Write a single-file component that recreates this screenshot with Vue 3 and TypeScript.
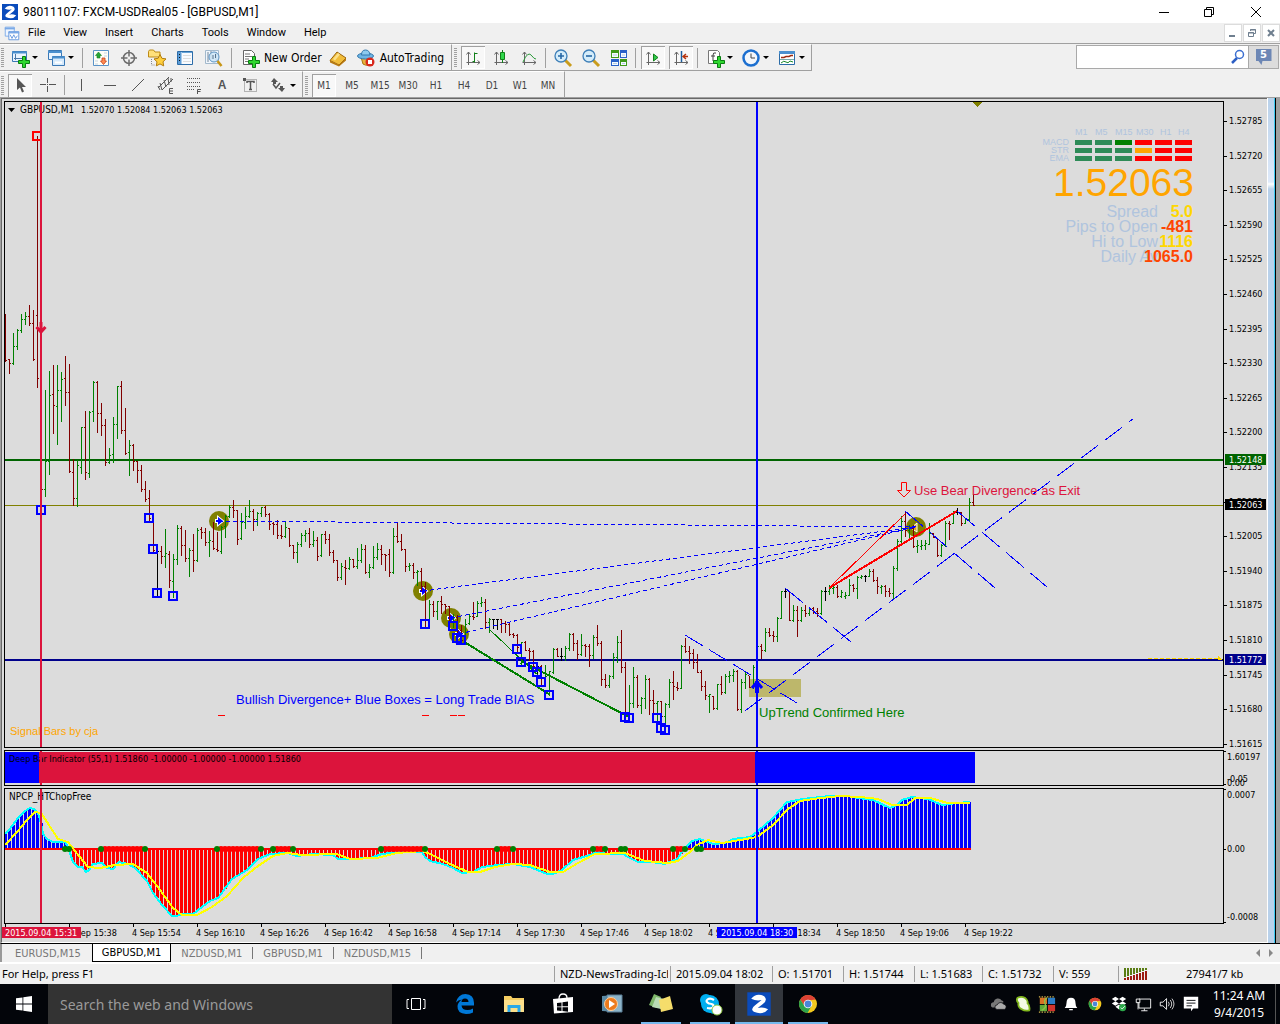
<script setup lang="ts">
type Point = [number, number]

const menus = ['File', 'View', 'Insert', 'Charts', 'Tools', 'Window', 'Help']
const frames = ['M1', 'M5', 'M15', 'M30', 'H1', 'H4', 'D1', 'W1', 'MN']
const tabs = ['EURUSD,M15', 'GBPUSD,M1', 'NZDUSD,M1', 'GBPUSD,M1', 'NZDUSD,M15']

interface Tool { icon?: string; label?: string; drop?: boolean; on?: boolean; sep?: boolean; title?: string }
const standard: Tool[] = [
  { icon: 'newChart', drop: true, title: 'New chart' }, { icon: 'profiles', drop: true, title: 'Profiles' }, { sep: true },
  { icon: 'market', title: 'Market Watch' }, { icon: 'target', title: 'Data Window' }, { icon: 'favorites', title: 'Navigator' },
  { icon: 'terminal', title: 'Terminal' }, { icon: 'tester', title: 'Strategy Tester' }, { sep: true },
  { icon: 'order', label: 'New Order' }, { icon: 'book', title: 'MetaEditor' }, { icon: 'auto', label: 'AutoTrading' },
]
const charting: Tool[] = [
  { icon: 'bars', on: true, title: 'Bar chart' }, { icon: 'candles', title: 'Candlesticks' }, { icon: 'line', title: 'Line chart' }, { sep: true },
  { icon: 'zoomIn', title: 'Zoom in' }, { icon: 'zoomOut', title: 'Zoom out' }, { icon: 'tile', title: 'Tile windows' }, { sep: true },
  { icon: 'scroll', on: true, title: 'Auto scroll' }, { icon: 'shift', on: true, title: 'Chart shift' }, { sep: true },
  { icon: 'indicators', drop: true, title: 'Indicators' }, { icon: 'clock', drop: true, title: 'Periods' }, { icon: 'template', drop: true, title: 'Templates' },
]
const drawing: Tool[] = [
  { icon: 'cursor', on: true, title: 'Cursor' }, { icon: 'cross', title: 'Crosshair' }, { sep: true },
  { icon: 'vline', title: 'Vertical line' }, { icon: 'hline', title: 'Horizontal line' }, { icon: 'trend', title: 'Trendline' },
  { icon: 'channel', title: 'Channel' }, { icon: 'fibo', title: 'Fibonacci' }, { icon: 'text', title: 'Text' },
  { icon: 'label', title: 'Text label' }, { icon: 'arrows', drop: true, title: 'Arrows' },
]

const axes = '<path d="M5.500 4v13M3.500 14.500H17" stroke="#666" fill="none"/><path d="M3.500 6.500l2-2.500 2 2.500M14.500 12.500l2.500 2-2.500 2" stroke="#666" fill="none"/>'
const plus = '<path d="M12.500 8.500h3v4h4v3h-4v4h-3v-4h-4v-3h4z" fill="#2fd82f" stroke="#087d10"/>'
const chrome = '<circle cx="10" cy="10" r="9" fill="#f2c81e"/><path d="M2.200 5.500A9 9 0 0 1 17.800 5.500L10 6.500 6.500 12z" fill="#dd4235"/><path d="M2.200 5.500A9 9 0 0 0 9.500 19L13.500 12 6.500 12z" fill="#2ba34b"/><circle cx="10" cy="10" r="4.300" fill="#fff"/><circle cx="10" cy="10" r="3.400" fill="#4a86d8"/>'
const logo = '<rect x="1" y="1" width="18" height="18" fill="#0a4bbb"/><path d="M4 6Q8 1 14 4Q17 7 13 10L9 13Q13 12 17 14Q13 19 6 16Q3 14 7 11L12 7Q8 8 4 6z" fill="#fff"/>'
const icons: Record<string, string> = {
  logo,
  chart: '<path d="M2.500 3.500h10v10h-10z" fill="#eef5ff" stroke="#7aa9e6"/><path d="M2 5h11" stroke="#7aa9e6" stroke-width="2"/><path d="M6.500 8.500h11v9h-11z" fill="#fff" stroke="#5e93dc"/><path d="M6 9.500h12" stroke="#7aa9e6" stroke-width="2"/><path d="M8 12l2 4 2-4 2 4 2-3" fill="none" stroke="#5e93dc"/>',
  newChart: '<path d="M2.500 3.500h14v10h-14z" fill="#e9f4ff" stroke="#3a78b5"/><path d="M2 4.500h15" stroke="#4a90cf" stroke-width="2"/><path d="M5.500 6v6M4 10.500h8" stroke="#4a78a8"/>' + plus,
  profiles: '<path d="M2.500 2.500h13v9h-13z" fill="#e9f4ff" stroke="#3a78b5"/><path d="M2 4h14" stroke="#4a90cf" stroke-width="2"/><path d="M6.500 8.500h12v9h-12z" fill="#d6eafc" stroke="#3a78b5"/><path d="M6 9.500h13" stroke="#4a90cf" stroke-width="2"/><path d="M9 14.500h7" stroke="#fff" stroke-width="2"/>',
  market: '<path d="M2.500 2.500h15v15h-15z" fill="#fffef8" stroke="#5a93c8"/><path d="M13 5h3M13 8h3M4 13h3M4 16h3" stroke="#c5d4e2"/><path d="M7.500 4l3 3.500H9v2.500H6V7.500H4.500z" fill="#27a536" stroke="#158022" stroke-width=".6"/><path d="M12.500 16.500l-3-3.500h1.500v-3h3v3h1.500z" fill="#ff8a50" stroke="#c4411c" stroke-width=".8"/>',
  target: '<circle cx="10" cy="10" r="5.500" fill="none" stroke="#6c6c6c" stroke-width="1.500"/><path d="M10 2v6.500M10 11.500V18M2 10h6.500M11.500 10H18" stroke="#6c6c6c" stroke-width="1.500"/>',
  favorites: '<path d="M1.500 3.500l1-1.500h4l1.500 2h5v5h-11.500z" fill="#ffe07a" stroke="#bd8b17"/><path d="M4.500 11v6H8" stroke="#888" fill="none" stroke-dasharray="1 1"/><path d="M13 6.500l1.900 3.800 4.100.600-3 2.900.700 4.100-3.700-2-3.700 2 .700-4.100-3-2.900 4.100-.600z" fill="#ffcf3c" stroke="#b27c0e"/>',
  terminal: '<path d="M2.500 3.500h15v13h-15z" fill="#f8fbff" stroke="#2c6ca8"/><path d="M3 4h3.500v12H3z" fill="#5b9bd5"/><path d="M7 4.500h10" stroke="#68a4d8"/><path d="M8 7.500h8M8 10.500h8M8 13.500h8" stroke="#ddd"/><path d="M4 6h1v1H4zM4 9h1v1H4zM4 12h1v1H4z" fill="#111"/>',
  tester: '<path d="M2.500 2.500h13v13h-13z" fill="#f0f6fc" stroke="#a3b9cc"/><path d="M5 4v10M8 3v8M13 4v8" stroke="#76889a"/><circle cx="11" cy="9" r="5" fill="#cfe6f7" fill-opacity=".85" stroke="#5e95c4"/><path d="M10 7v4M12.500 6v4" stroke="#56728c"/><path d="M14.500 13l4 5" stroke="#c79516" stroke-width="2.500"/>',
  order: '<path d="M3.500 2.500h8l3 3v11h-11z" fill="#fff" stroke="#666"/><path d="M5 6h5M5 8.500h7M5 11h4M5 13.500h3" stroke="#777"/>' + plus,
  book: '<path d="M2 12.500L9 4l9 6-7 7z" fill="#f1bd3a" stroke="#99630b"/><path d="M2 12.500l9 4.500 7-7v2.500l-7 6-9-4z" fill="#b8790f"/><path d="M5 11l5-6 2 1.500-5 6z" fill="#fbe08a"/>',
  auto: '<path d="M5 9l2 7q5 3 8-1V8z" fill="#e8b23d" stroke="#a8760f"/><ellipse cx="9.500" cy="8" rx="8" ry="3" fill="#6db5e4" stroke="#3579ad"/><path d="M5.500 7q0-5 4-5t4.500 5z" fill="#8ecbef" stroke="#3579ad"/><circle cx="14" cy="14" r="4.500" fill="#d8281c"/><path d="M12 12h4v4h-4z" fill="#fff"/>',
  bars: axes + '<path d="M9.500 13.500h2M11.500 4.500v10M11.500 5.500h3" stroke="#12801a" fill="none"/>',
  candles: axes + '<path d="M11.500 2v13" stroke="#12801a"/><path d="M9.500 4.500h4v7h-4z" fill="#2fd84a" stroke="#12801a"/>',
  line: axes + '<path d="M4 14q5-12 9-6 2 3 4 3" stroke="#2b9a3a" fill="none"/>',
  zoomIn: '<path d="M12 12l6 6" stroke="#c99c1c" stroke-width="3"/><circle cx="8" cy="8" r="6" fill="#d4ecfa" stroke="#3e7fb8" stroke-width="1.300"/><path d="M5 8h6M8 5v6" stroke="#2667a5" stroke-width="1.600"/>',
  zoomOut: '<path d="M12 12l6 6" stroke="#c99c1c" stroke-width="3"/><circle cx="8" cy="8" r="6" fill="#d4ecfa" stroke="#3e7fb8" stroke-width="1.300"/><path d="M5 8h6" stroke="#2667a5" stroke-width="1.600"/>',
  tile: '<path d="M2 2h8v8H2zM11 11h7v7h-7z" fill="#3f9a1a"/><path d="M11 2h7v8h-7zM2 11h8v7H2z" fill="#2a62c9"/><path d="M3 5h6v4H3zM12 5h5v4h-5zM3 14h6v3H3zM12 14h5v3h-5z" fill="#f4faff"/><path d="M4 7h4M13 7h3M4 15.500h4M13 15.500h3" stroke="#b5cbe0"/>',
  scroll: axes + '<path d="M10.500 6v7l4.500-3.500z" fill="#2fc84a" stroke="#12801a"/>',
  shift: axes + '<path d="M10.500 3v11" stroke="#1d5d9c" stroke-width="1.500"/><path d="M17 8.500h-4M15 6l-3 2.500 3 2.500" stroke="#b5310c" fill="none" stroke-width="1.400"/>',
  indicators: '<path d="M3.500 2.500h9l2 2v11h-11z" fill="#fff" stroke="#777"/><path d="M11 5q-3-1-3 2v6M6 8h4" stroke="#444" fill="none"/>' + plus,
  clock: '<circle cx="10" cy="10" r="7.500" fill="#f4f7fb" stroke="#1c6fd0" stroke-width="2.500"/><path d="M10 5.500V10h4" stroke="#444" fill="none"/>',
  template: '<path d="M2.500 3.500h15v13h-15z" fill="#fff" stroke="#2c6ca8"/><path d="M2 4.500h16" stroke="#4a90cf" stroke-width="3"/><path d="M4 9.500h3l2-1h3l2-1h2" stroke="#9c2c12" fill="none" stroke-width="1.400"/><path d="M3 11.500h14" stroke="#7aa"/><path d="M4 15q3-3 5-1t4-1l3 1" stroke="#1a8a2a" fill="none"/>',
  cursor: '<path d="M7 3v12l3-2.500 2 5 2-1-2-4.500h4z" fill="#555"/>',
  cross: '<path d="M9.500 3v5M9.500 11v6M2 9.500h6M11 9.500h7" stroke="#555"/><path d="M9 9h1v1H9z" fill="#555"/>',
  vline: '<path d="M9.500 4v12" stroke="#555"/>',
  hline: '<path d="M4 10.500h12" stroke="#555"/>',
  trend: '<path d="M4 16L16 4" stroke="#555"/>',
  channel: '<path d="M2 13L13 2M6 15L17 4M4 8l2 7M8 5l2 7M12 3l1 7M2 11l2 4M15 3l0 4" stroke="#555" fill="none"/><path d="M17 13.500h-3.500v5H17M13.500 16H17" stroke="#555" fill="none"/>',
  fibo: '<path d="M3 3.500h14M3 7.500h14M3 11.500h14M3 14.500h8" stroke="#555" stroke-dasharray="1 1"/><path d="M17 14.500h-3.500V19M13.500 16.500h3" stroke="#555" fill="none"/>',
  label: '<rect x="4.500" y="4.500" width="12" height="12" fill="none" stroke="#777" stroke-dasharray="1 1"/><path d="M7 8V6.500h7V8M10.500 6.500v8M9 14.500h3" stroke="#555" stroke-width="1.500" fill="none"/><path d="M3 3h3v3H3z" fill="#555"/>',
  arrows: '<path d="M6 3l4 4H8v2H5V7H3z" fill="#555"/><path d="M5 9l3 4 4-5" stroke="#555" stroke-width="1.500" fill="none"/><path d="M14 17l-4-4h2v-2h3v2h2z" fill="#555"/>',
  taskView: '<path d="M5.500 4.500h9v11h-9z" fill="none" stroke="#fff"/><path d="M3 5.500H1v9h2M17 5.500h2v9h-2" fill="none" stroke="#fff"/>',
  edge: '<path d="M1 8.500Q3 0 10.500 0Q19 .500 19 9v2.500H6.500q.500 4.500 6 4.500 3 0 5.500-1.500v4Q15 20 11 20 2 19.500 2.500 12q.500-4 4.500-6.500Q3 6 1 8.500zM6.500 8h7q0-3.500-3.500-3.500T6.500 8z" fill="#0078d7"/>',
  folder: '<path d="M0 2h7l1.500 2H20v14H0z" fill="#f5ce62"/><path d="M0 6h20v12H0z" fill="#fde08b"/><path d="M3.500 18v-7h13v7h-3v-4h-7v4z" fill="#2ca9e8"/>',
  store: '<path d="M0 5l20-2v15l-19 1.500z" fill="#fff"/><path d="M6 5q0-5 4-5t4 4" stroke="#fff" stroke-width="1.300" fill="none"/><path d="M4 9l4.500-.600v4H4zM9.500 8.300L15 7.500v4.700H9.500zM4 13.300h4.500v3.600L4 16.500zM9.500 13.300H15v4.400l-5.500-.600z" fill="#03050a"/>',
  media: '<path d="M0 2l14-1v17L0 17z" fill="#5b8aa5"/><path d="M5 1h15v17H5z" fill="#8db4c9" stroke="#5a7f96"/><circle cx="9" cy="10" r="6.500" fill="#ee7b1c" stroke="#fbd0a0"/><path d="M7 6l6 4-6 4z" fill="#fff"/>',
  notes: '<path d="M3 0l7 3-4 11-8-3z" fill="#7fb86c"/><path d="M5 3l8 2-3 10-9-2z" fill="#b9dcb5"/><path d="M8 6l11-4 3 13-12 3z" fill="#f5dd6b"/>',
  skype: '<circle cx="6" cy="6" r="6" fill="#00aff0"/><circle cx="14" cy="14" r="6" fill="#00aff0"/><circle cx="10" cy="10" r="9" fill="#00aff0"/><path d="M14 6Q10 3.500 7.500 5.500T9 9.500q5 .500 4.500 3T7 14" stroke="#fff" stroke-width="2.200" fill="none"/><circle cx="17" cy="16" r="5" fill="#fff" stroke="#8cc63f"/>',
  chrome,
  cloud: '<path d="M4 14a3 3 0 0 1 0-6 5 5 0 0 1 9-2q2 0 2 2l-5 2-2 4z" fill="#777"/><path d="M8 16a2.500 2.500 0 0 1 0-5 4 4 0 0 1 7-1q3 .500 3 3t-2 3z" fill="#aaa" stroke="#05070b" stroke-width=".8"/>',
  leaf: '<path d="M4 3q4-2 8 0 4 3 3 6 3 3 2 8-5 1-8-1-5-2-4-7Q2 6 4 3z" fill="#f4fbe4" stroke="#82b81e" stroke-width="2"/>',
  shield: '<path d="M2 3h8v7H2z" fill="#d87324"/><path d="M11 3h8v7h-8z" fill="#2b7bc4"/><path d="M2 11h8v7H2z" fill="#5faa37"/><path d="M11 11h8v7h-8z" fill="#d0342c"/><path d="M1 2h18M1 19h18" stroke="#d4b64d" stroke-width="1.500" stroke-dasharray="1.500 1.500"/><path d="M10 3Q6 6 8 10t-4 7" stroke="#8cc04a" stroke-width="1.500" fill="none"/>',
  bell: '<path d="M10 3q5 0 5 6 0 4 2 5.500H3Q5 13 5 9q0-6 5-6zM8 15.500h4v1.500H8z" fill="#fff"/>',
  dropbox: '<path d="M6 2l4 2.500-4 2.500-4-2.500zM14 2l4 2.500-4 2.500-4-2.500zM6 7l4 2.500L6 12l-4-2.500zM14 7l4 2.500-4 2.500-4-2.500zM6 13l4-2.500 4 2.500-4 3z" fill="#fff"/><circle cx="14" cy="14" r="4" fill="#2ca84a"/><path d="M12 14l1.500 1.500 3-3" stroke="#fff" fill="none"/>',
  network: '<path d="M5.500 4.500h13v10h-13z" fill="none" stroke="#fff"/><path d="M2.500 4.500h4v4h-4zM4.500 8v8M11.500 15v2.500M8 17.500h7" stroke="#fff" fill="#05070b"/>',
  volume: '<path d="M2.500 8h3l4-4v12l-4-4h-3z" fill="none" stroke="#fff"/><path d="M11.500 7.500q2 2.500 0 5M13.500 5.500q3.500 4.500 0 9M15.500 4q4.500 6 0 12" stroke="#ddd" fill="none"/>',
  action: '<path d="M2 2h16v13h-5.500L10 18v-3H2z" fill="#fff"/><path d="M5 6h10M5 9h10M5 12h6" stroke="#05070b"/>',
}

const apps = [
  { icon: 'taskView', state: '' }, { icon: 'edge', state: '' }, { icon: 'folder', state: '' }, { icon: 'store', state: '' },
  { icon: 'media', state: '' }, { icon: 'notes', state: 'open' }, { icon: 'skype', state: 'open' },
  { icon: 'logo', state: 'active' }, { icon: 'chrome', state: 'open' },
]
const tray = ['cloud', 'leaf', 'shield', 'bell', 'chrome', 'dropbox', 'network', 'volume', 'action']

/* one record per minute: high, low, open, close */
const quotes = `314,361,314,360 359,373,359,363 333,364,363,346 329,349,346,330 314,332,330,319 312,324,319,316 305,325,316,323 310,360,323,359 136,387,315,378 361,508,385,489
390,496,489,461 371,474,461,395 365,433,394,405 365,444,406,390 372,421,390,379 356,405,378,392 364,472,392,471 459,505,472,498 460,506,498,465 427,473,467,427
411,479,427,472 411,477,473,412 381,421,411,382 381,432,382,413 403,435,413,425 419,465,425,462 448,463,462,455 417,462,454,424 386,438,424,386 381,433,386,430
408,454,430,453 440,475,452,445 444,470,445,461 461,482,461,470 465,491,470,489 481,501,489,499 490,520,498,518 518,551,518,550 548,595,551,551 546,563,551,556
529,567,556,553 551,587,554,580 554,597,581,559 525,564,559,528 526,555,528,545 530,561,545,558 548,576,558,550 534,571,550,560 528,561,560,530 527,538,529,532
528,545,532,542 531,556,542,540 522,549,541,548 532,551,549,550 526,553,551,527 515,537,526,516 505,517,516,507 500,517,507,510 510,544,510,539 513,539,538,522
507,528,522,516 500,517,516,511 509,530,511,519 512,525,519,513 507,516,513,507 506,516,507,514 513,529,514,524 522,534,523,524 520,538,524,535 525,538,535,536
522,537,536,527 528,546,528,545 545,558,545,552 542,562,552,544 533,546,544,535 530,541,535,533 528,547,533,544 531,546,544,540 537,560,540,556 534,556,555,534
531,543,534,539 534,555,539,552 550,562,552,560 560,580,560,577 563,579,577,566 560,584,567,568 557,569,568,559 559,567,559,566 548,568,566,560 544,562,560,549
545,573,549,572 564,577,572,567 546,568,567,557 543,559,557,549 545,564,549,554 554,570,554,555 549,576,554,572 528,573,572,536 522,542,536,541 534,550,541,549
549,571,549,566 563,570,566,565 563,578,565,572 570,585,572,571 568,590,571,586 582,626,586,620 600,620,620,604 601,616,604,611 601,619,611,601 596,613,601,604
604,613,604,606 606,624,606,615 614,627,622,617 615,637,617,630 625,642,630,640 619,637,636,624 614,624,623,616 602,619,616,617 601,616,616,603 597,606,603,602
599,628,602,622 618,632,622,619 619,628,619,619 619,629,619,619 619,632,619,623 621,632,623,624 623,635,624,634 633,637,634,635 634,651,635,647 642,664,663,642
641,650,642,650 648,660,650,651 650,670,651,666 662,673,666,666 665,684,666,678 665,683,678,676 671,695,694,671 648,673,672,649 648,656,649,656 648,660,656,656
646,660,656,648 633,650,648,634 633,650,634,643 640,659,643,654 634,655,654,645 644,656,645,646 644,666,646,655 635,658,655,637 625,645,637,643 641,685,643,679
674,687,679,685 675,687,685,676 653,678,676,657 636,662,657,642 630,672,642,667 662,717,667,712 685,717,716,703 667,707,703,677 675,707,677,705 697,713,705,698
675,708,698,679 678,714,679,700 690,713,700,703 701,720,703,701 701,729,701,716 703,732,716,704 679,707,704,682 671,699,682,686 682,690,687,688 645,688,688,646
638,652,646,651 646,663,651,653 649,668,653,662 654,672,662,672 670,690,672,686 681,699,686,695 694,712,696,694 696,709,696,708 684,709,708,684 676,694,684,692
674,693,692,676 671,682,676,675 669,681,675,671 670,710,671,709 679,712,709,682 671,688,682,674 676,687,675,687 665,688,687,667 645,667,667,646 644,658,646,650
628,651,650,632 628,636,632,635 631,641,635,636 617,641,636,618 591,618,618,591 588,597,591,591 591,620,591,620 605,621,620,610 606,636,610,620 607,621,620,610
605,616,610,613 607,615,613,608 607,613,608,611 608,616,611,613 590,614,613,591 587,600,591,591 585,594,591,588 585,593,588,587 585,597,587,596 590,597,596,592
592,598,596,595 579,595,595,585 584,591,585,588 576,598,588,577 575,578,577,576 575,581,576,576 569,576,576,571 569,581,571,580 577,593,580,586 585,593,587,586
585,596,586,591 588,596,591,593 566,598,593,568 539,570,568,541 516,542,541,521 511,536,521,530 525,537,530,528 525,547,528,546 540,552,546,545 540,549,546,545
540,549,545,543 523,544,544,533 533,537,533,537 538,556,538,555 544,556,555,545 521,546,545,523 521,539,523,524 511,523,523,512 508,514,512,512 512,525,512,523
518,523,523,519 498,520,519,502 494,505,502,505`.split(/\s+/).map((q) => q.split(',').map(Number))

const candles = quotes.map(([high, low, open, close], i) => {
  const x = 5 + i * 4
  return {
    d: `M${x} ${high}h1v${low - high + 1}h-1zM${x - 1} ${open}h1v1h-1zM${x + 1} ${close}h1v1h-1z`,
    fill: close > open ? '#800000' : close < open ? '#008000' : '#000',
  }
})

const fast: Point[] = [[5, 834], [9, 830], [18, 818], [25, 811], [30, 808], [34, 809], [38, 813], [41, 823], [43, 834], [47, 839], [53, 842], [65, 842], [68, 847], [70, 853], [73, 862], [78, 867], [82, 867], [86, 872], [89, 870], [93, 864], [102, 863], [107, 868], [113, 869], [119, 862], [128, 864], [135, 868], [147, 881], [153, 893], [162, 905], [172, 916], [177, 916], [182, 914], [193, 914], [202, 907], [210, 901], [218, 898], [232, 879], [247, 870], [258, 859], [270, 854], [287, 853], [297, 856], [313, 854], [333, 855], [338, 859], [350, 859], [370, 858], [382, 854], [400, 852], [422, 852], [425, 857], [430, 861], [443, 864], [453, 868], [462, 873], [473, 872], [482, 867], [498, 865], [513, 864], [530, 867], [547, 874], [553, 874], [562, 870], [573, 860], [590, 855], [597, 852], [607, 854], [623, 854], [628, 857], [638, 862], [652, 862], [665, 864], [677, 859], [685, 848], [692, 841], [700, 839], [713, 844], [725, 843], [733, 839], [750, 837], [758, 831], [773, 818], [787, 802], [803, 799], [830, 796], [847, 796], [858, 798], [873, 800], [890, 808], [897, 805], [902, 800], [912, 797], [928, 799], [942, 805], [957, 803], [970, 802]]
const slow: Point[] = [[5, 845], [17, 832], [27, 820], [35, 812], [41, 813], [47, 822], [58, 839], [68, 842], [75, 851], [88, 867], [100, 868], [115, 865], [133, 864], [147, 873], [160, 890], [173, 908], [182, 915], [197, 915], [212, 907], [227, 896], [243, 878], [258, 866], [273, 856], [287, 853], [302, 855], [337, 854], [350, 859], [377, 858], [397, 853], [423, 851], [430, 854], [450, 864], [468, 872], [480, 872], [495, 867], [513, 864], [530, 865], [550, 872], [563, 872], [578, 863], [595, 854], [625, 853], [645, 861], [668, 863], [678, 861], [690, 852], [697, 845], [708, 840], [722, 843], [740, 840], [757, 837], [773, 825], [788, 809], [800, 801], [813, 799], [840, 796], [860, 797], [878, 799], [892, 805], [907, 805], [915, 798], [930, 798], [948, 803], [970, 803]]

function valueAt(x: number): number {
  const k = Math.max(1, fast.findIndex((p) => p[0] >= x))
  const [x0, y0] = fast[k - 1]
  const [x1, y1] = fast[k]
  return Math.round(y0 + ((y1 - y0) * (x - x0)) / (x1 - x0))
}
const histogram = Array.from({ length: 242 }, (_, i) => {
  const x = 5 + i * 4
  const y = valueAt(x)
  return { x: x - 1, y: Math.min(y, 849), h: Math.abs(y - 849), fill: y < 849 ? '#00f' : '#f00' }
})
const greenDots = [65, 69, 101, 145, 217, 261, 273, 293, 381, 425, 497, 513, 593, 605, 621, 625, 673, 685, 697, 701]
const redDots = [[101, 145], [217, 261], [273, 293], [381, 425], [497, 513], [593, 605], [673, 685]]
  .flatMap(([a, b]) => Array.from({ length: (b - a) / 4 - 1 }, (_, i) => a + 4 + i * 4))

const boxes: Point[] = [[41, 510], [149, 518], [153, 549], [157, 593], [173, 596], [425, 624], [453, 626], [457, 638], [461, 640], [517, 649], [521, 662], [533, 667], [537, 672], [541, 682], [549, 695], [625, 717], [629, 718], [657, 718], [661, 728], [665, 730]]
const entries: Point[] = [[219, 521], [423, 591], [451, 618], [459, 634]]
const pitchforks = [
  { d: 'M745 711L1133 419', dash: '22 8' },
  { d: 'M685 635L797 703', dash: '21 7' },
  { d: 'M785 588L851 642', dash: '23 8' },
  { d: 'M905 511L995 588', dash: '24 8' },
  { d: 'M957 511L1047 587', dash: '24 8' },
]

const prices = Array.from({ length: 19 }, (_, i) => ({ y: Math.round(121 + i * 34.6), text: (1.52785 - i * 0.00065).toFixed(5) }))
const tags = [
  { y: 454, text: '1.52148', fill: '#006400' },
  { y: 499, text: '1.52063', fill: '#000' },
  { y: 654, text: '1.51772', fill: '#00008b' },
]
const times = ['', '15:38', '15:54', '16:10', '16:26', '16:42', '16:58', '17:14', '17:30', '17:46', '18:02', '18:18', '18:34', '18:50', '19:06', '19:22']

const columns = [['M1', 1075], ['M5', 1095], ['M15', 1115], ['M30', 1136], ['H1', 1160], ['H4', 1178]] as [string, number][]
const sea = '#2e8b57'
const signals = [
  { name: 'MACD', y: 140, cells: [sea, sea, '#008000', '#f00', '#f00', '#f00'] },
  { name: 'STR', y: 148, cells: [sea, sea, sea, '#ffa500', '#f00', '#f00'] },
  { name: 'EMA', y: 156, cells: [sea, sea, sea, '#f00', '#f00', '#f00'] },
]
const stats = [
  { label: 'Spread', value: '5.0', y: 217, fill: '#ffd700' },
  { label: 'Pips to Open', value: '-481', y: 232, fill: '#ff4500' },
  { label: 'Hi to Low', value: '1116', y: 247, fill: '#ffd700' },
  { label: 'Daily Av', value: '1065.0', y: 262, fill: '#ff4500' },
]
const poly = (pts: Point[]) => pts.map((p) => p.join(',')).join(' ')
</script>

<template>
  <div class="window">
    <header class="titlebar">
      <svg class="logo" viewBox="1 1 18 18" v-html="icons.logo"></svg>
      <h1>98011107: FXCM-USDReal05 - [GBPUSD,M1]</h1>
      <button aria-label="Minimize"><svg viewBox="0 0 12 12"><path d="M1 6.500h10" /></svg></button>
      <button aria-label="Restore"><svg viewBox="0 0 12 12"><path d="M1.500 3.500h7v7h-7zM3.500 3V1.500h7v7H9" /></svg></button>
      <button aria-label="Close"><svg viewBox="0 0 12 12"><path d="M1 1l10 10M11 1L1 11" /></svg></button>
    </header>

    <nav class="menubar">
      <svg class="doc" viewBox="0 0 20 20" v-html="icons.chart"></svg>
      <button v-for="m in menus" :key="m" class="menu">{{ m }}</button>
      <span class="grow"></span>
      <button class="mdi" aria-label="Minimize chart"><svg viewBox="0 0 12 12"><path d="M2 9h6" stroke-width="2" /></svg></button>
      <button class="mdi" aria-label="Restore chart"><svg viewBox="0 0 12 12"><path d="M2.500 5.500h5v4h-5zM2 6h6M4.500 4V2.500h5v4H8M4 3h6" /></svg></button>
      <button class="mdi" aria-label="Close chart"><svg viewBox="0 0 12 12"><path d="M3 3l6 6M9 3L3 9" stroke-width="2" /></svg></button>
    </nav>

    <div class="toolbar">
      <div class="band first">
        <i class="grip"></i>
        <template v-for="(t, i) in standard" :key="i">
          <i v-if="t.sep" class="sep wide"></i>
          <button v-else class="tool" :class="{ on: t.on }" :aria-label="t.title">
            <svg viewBox="0 0 20 20" v-html="icons[t.icon!]"></svg><span v-if="t.label" class="caption">{{ t.label }}</span><b v-if="t.drop" class="caret"></b>
          </button>
        </template>
      </div>
      <div class="band next">
        <i class="grip"></i>
        <template v-for="(t, i) in charting" :key="i">
          <i v-if="t.sep" class="sep"></i>
          <button v-else class="tool" :class="{ on: t.on }" :aria-label="t.title">
            <svg viewBox="0 0 20 20" v-html="icons[t.icon!]"></svg><b v-if="t.drop" class="caret"></b>
          </button>
        </template>
      </div>
      <span class="grow"></span>
      <div class="find">
        <input type="text" aria-label="Search" />
        <svg viewBox="0 0 16 16"><path d="M2 14l5-5" stroke="#2d5fc4" stroke-width="2.500" /><circle cx="9.500" cy="5.500" r="4" fill="#fff" stroke="#3c6fd0" stroke-width="1.500" /></svg>
        <button aria-label="Messages"><span class="bubble">5</span></button>
      </div>
    </div>

    <div class="toolbar second">
      <div class="band">
        <i class="grip"></i>
        <template v-for="(t, i) in drawing" :key="i">
          <i v-if="t.sep" class="sep"></i>
          <button v-else class="tool" :class="{ on: t.on }" :aria-label="t.title">
            <span v-if="t.icon === 'text'" class="letter">A</span>
            <svg v-else viewBox="0 0 20 20" v-html="icons[t.icon!]"></svg><b v-if="t.drop" class="caret"></b>
          </button>
        </template>
      </div>
      <div class="band next">
        <i class="grip"></i>
        <button v-for="f in frames" :key="f" class="tool frame" :class="{ on: f === 'M1' }">{{ f }}</button>
      </div>
    </div>

    <main class="chart">
      <div class="panels">
        <section class="panel price">
          <svg class="plot">
            <g transform="translate(-5 -102)">
              <g shape-rendering="crispEdges">
                <rect x="749" y="679" width="52" height="18" fill="#bdb76b" />
                <rect x="5" y="505" width="100%" height="1" fill="#808000" />
                <rect x="5" y="459" width="100%" height="2" fill="#006400" />
                <rect x="5" y="659" width="100%" height="2" fill="#00008b" />
                <path d="M489 629L541 678" stroke="#008000" fill="none" />
                <path d="M461 640L549 694M521 661L629 717" stroke="#008000" stroke-width="2" fill="none" />
              </g>
              <circle v-for="(e, i) in entries" :key="i" :cx="e[0]" :cy="e[1]" r="10" fill="#808000" />
              <path v-for="(e, i) in entries" :key="'a' + i" :transform="`translate(${e[0]} ${e[1]})`" d="M-3 -1h2v-3l5 4-5 4v-3h-2z" fill="#00f" stroke="#fff" stroke-width="2" paint-order="stroke" />
              <circle cx="916" cy="527" r="10" fill="#808000" />
              <path d="M911 528l6-5v9z" fill="#daa520" stroke="#fff" />
              <g shape-rendering="crispEdges">
                <path v-for="(c, i) in candles" :key="i" :d="c.d" :fill="c.fill" />
              </g>
              <g shape-rendering="crispEdges" fill="none">
                <path v-for="(e, i) in entries" :key="i" :d="`M${e[0]} ${e[1]}L916 527`" stroke="#00f" stroke-dasharray="4 3" />
                <path v-for="p in pitchforks" :key="p.d" :d="p.d" stroke="#00f" :stroke-dasharray="p.dash" />
                <path d="M829 588L957 511" stroke="#f00" stroke-width="2" />
                <path d="M829 588L905 514" stroke="#f00" />
                <rect v-for="(b, i) in boxes" :key="'b' + i" :x="b[0] - 4" :y="b[1] - 4" width="8" height="8" stroke="#00f" stroke-width="2" />
                <rect x="33" y="132" width="8" height="8" stroke="#f00" stroke-width="2" />
                <path d="M218 715.500h7M422 715.500h7M450 715.500h7M458 715.500h7" stroke="#f00" />
                <path d="M1148 658.500h70" stroke="#ffd700" stroke-dasharray="4 2" />
                <path d="M1218 655v5h4z" fill="#ffd700" />
                <path d="M973 102h9l-4.500 5z" fill="#808000" />
              </g>
              <g class="small" fill="#000">
                <path d="M8 108h7l-3.500 4z" />
                <text x="20" y="113" font-size="10">GBPUSD,M1</text>
                <text x="81" y="113" font-size="9">1.52070 1.52084 1.52063 1.52063</text>
              </g>
              <g class="arial">
                <text x="236" y="704" font-size="13" fill="#00f">Bullish Divergence+ Blue Boxes = Long Trade BIAS</text>
                <text x="759" y="717" font-size="13" fill="#008000">UpTrend Confirmed Here</text>
                <text x="914" y="495" font-size="13" fill="#dc143c">Use Bear Divergence as Exit</text>
                <text x="10" y="735" font-size="11" fill="#ffa500">Signal Bars by cja</text>
                <text x="1194" y="196" font-size="39" text-anchor="end" fill="#ffa500">1.52063</text>
                <g font-size="9" fill="#b0c4de">
                  <text v-for="c in columns" :key="c[0]" :x="c[1]" y="135">{{ c[0] }}</text>
                  <text v-for="s in signals" :key="s.name" x="1069" :y="s.y + 5" text-anchor="end">{{ s.name }}</text>
                </g>
                <g v-for="s in signals" :key="s.name">
                  <rect v-for="(c, i) in s.cells" :key="i" :x="1075 + i * 20" :y="s.y" width="17" height="5" :fill="c" />
                </g>
                <g v-for="s in stats" :key="s.label" font-size="16" text-anchor="end">
                  <text x="1158" :y="s.y" fill="#b0c4de">{{ s.label }}</text>
                  <text x="1193" :y="s.y" font-weight="bold" :fill="s.fill">{{ s.value }}</text>
                </g>
              </g>
              <path d="M901.500 482.500h5v8h4l-6.500 6.500-6.500-6.500h4z" fill="none" stroke="#f00" />
              <rect x="40" y="102" width="2" height="100%" fill="#dc143c" />
              <rect x="756" y="102" width="2" height="100%" fill="#00f" />
              <path d="M36.500 327l4.500 5 4.500-5M41 322v10" fill="none" stroke="#dc143c" stroke-width="3" />
              <path d="M752 688l5-6 5 6" fill="none" stroke="#00f" stroke-width="3" />
              <path d="M757 681v12" stroke="#00f" stroke-width="4" />
            </g>
          </svg>
          <svg class="scale">
            <g transform="translate(-1224 -102)" class="small" font-size="9">
              <g v-for="p in prices" :key="p.y">
                <path :d="`M1224 ${p.y}h3v1h-3z`" />
                <text x="1229" :y="p.y + 3">{{ p.text }}</text>
              </g>
              <g v-for="t in tags" :key="t.text">
                <rect x="1225" :y="t.y" width="41" height="11" :fill="t.fill" />
                <text x="1229" :y="t.y + 9" fill="#fff">{{ t.text }}</text>
              </g>
            </g>
          </svg>
        </section>

        <section class="panel deep">
          <svg class="plot">
            <g transform="translate(-5 -751)" shape-rendering="crispEdges">
              <rect x="756" y="751" width="2" height="40" fill="#00f" />
              <rect x="5" y="752" width="34" height="31" fill="#00f" />
              <rect x="39" y="752" width="716" height="31" fill="#dc143c" />
              <rect x="755" y="752" width="220" height="31" fill="#00f" />
              <text x="9" y="762" class="small" font-size="9">Deep Bar Indicator (55,1) 1.51860 -1.00000 -1.00000 -1.00000 1.51860</text>
              <rect x="40" y="751" width="2" height="40" fill="#dc143c" />
            </g>
          </svg>
          <svg class="scale">
            <g transform="translate(-1224 -751)" class="small" font-size="9">
              <path d="M1224 751h2v1h-2zM1224 784h2v1h-2z" />
              <text x="1227" y="760">1.60197</text>
              <text x="1227" y="782">-0.05</text>
              <text x="1227" y="786">0.00</text>
            </g>
          </svg>
        </section>

        <section class="panel chop">
          <svg class="plot">
            <g transform="translate(-5 -789)">
              <g shape-rendering="crispEdges">
                <rect v-for="h in histogram" :key="h.x" :x="h.x" :y="h.y" width="3" :height="h.h" :fill="h.fill" />
                <rect x="5" y="848" width="966" height="2" fill="#f00" />
                <polyline :points="poly(fast)" fill="none" stroke="#0ff" stroke-width="2" />
                <polyline :points="poly(slow)" fill="none" stroke="#ff0" stroke-width="2" />
              </g>
              <circle v-for="x in redDots" :key="x" :cx="x" cy="849" r="3" fill="#f00" />
              <circle v-for="x in greenDots" :key="x" :cx="x" cy="849" r="3" fill="#008000" />
              <text x="9" y="800" class="small" font-size="10">NPCP_HTChopFree</text>
              <rect x="40" y="789" width="2" height="140" fill="#dc143c" />
              <rect x="756" y="789" width="2" height="140" fill="#00f" />
            </g>
          </svg>
          <svg class="scale">
            <g transform="translate(-1224 -789)" class="small" font-size="9">
              <path d="M1224 789h2v1h-2zM1224 849h2v1h-2zM1224 922h2v1h-2z" />
              <text x="1227" y="798">0.0007</text>
              <text x="1227" y="852">0.00</text>
              <text x="1227" y="920">-0.0008</text>
            </g>
          </svg>
        </section>

        <svg class="times">
          <g transform="translate(-2 -924)" class="small" font-size="9">
            <g v-for="(t, i) in times" :key="i">
              <rect :x="5 + i * 64" y="924" width="1" height="3" />
              <text v-if="t" :x="4 + i * 64" y="936">4 Sep {{ t }}</text>
            </g>
            <rect x="2" y="927" width="79" height="11" fill="#dc143c" />
            <text x="5" y="936" fill="#fff">2015.09.04 15:31</text>
            <rect x="717" y="927" width="80" height="11" fill="#00f" />
            <text x="721" y="936" fill="#fff">2015.09.04 18:30</text>
          </g>
        </svg>
      </div>
      <div class="edge"></div>
    </main>

    <nav class="tabs">
      <button v-for="(t, i) in tabs" :key="i" :class="{ current: i === 1, first: i === 0 }">{{ t }}</button>
      <span class="grow"></span>
      <i class="left"></i><i class="right"></i>
    </nav>

    <footer class="status">
      <span class="help">For Help, press F1</span>
      <span class="cell profile">NZD-NewsTrading-Ich</span>
      <span class="cell date">2015.09.04 18:02</span>
      <span class="cell quote">O: 1.51701</span>
      <span class="cell quote">H: 1.51744</span>
      <span class="cell low">L: 1.51683</span>
      <span class="cell quote">C: 1.51732</span>
      <span class="cell vol">V: 559</span>
      <span class="cell net">
        <svg viewBox="0 0 24 12" shape-rendering="crispEdges">
          <template v-for="i in 8" :key="i">
            <rect :x="i * 3 - 3" y="0" width="2" :height="10 - i" fill="#5a7d14" />
            <rect :x="i * 3 - 3" :y="11 - i" width="2" :height="i + 1" fill="#9c1c10" />
          </template>
        </svg>
        <span>27941/7 kb</span>
      </span>
    </footer>

    <div class="taskbar">
      <button class="start" aria-label="Start">
        <svg viewBox="0 0 16 16"><path d="M0 2.300L6.500 1.400v6.200H0zM7.300 1.300L16 0v7.600H7.300zM0 8.400h6.500v6.200L0 13.700zM7.300 8.400H16V16l-8.700-1.300z" fill="#fff" /></svg>
      </button>
      <input type="text" aria-label="Search the web and Windows" placeholder="Search the web and Windows" />
      <button v-for="a in apps" :key="a.icon" class="app" :class="a.state" :aria-label="a.icon">
        <svg viewBox="0 0 20 20" v-html="icons[a.icon]"></svg>
      </button>
      <span class="grow"></span>
      <svg v-for="t in tray" :key="t" class="tray" :class="{ tiny: t === 'chrome' }" viewBox="0 0 20 20" v-html="icons[t]"></svg>
      <div class="clock"><span>11:24 AM</span><span>9/4/2015</span></div>
      <i class="peek"></i>
    </div>
  </div>
</template>

<style>
body { margin: 0; background: #f0f0f0; }
</style>

<style scoped>
.window {
  display: flex;
  flex-direction: column;
  min-height: 100vh;
  background: #f0f0f0;
  font-family: "Noto Sans", "Open Sans", sans-serif;
  font-size: 12px;
  line-height: 16px;
  color: #000;
}
button, input { font: inherit; color: inherit; background: none; border: 0; padding: 0; margin: 0; border-radius: 0; outline: 0; }
button { display: flex; align-items: center; justify-content: center; white-space: nowrap; }
.grow { flex: 1; }
.small { font-family: "DejaVu Sans Condensed", "DejaVu Sans", sans-serif; font-stretch: condensed; }
.arial { font-family: "Liberation Sans", Arial, sans-serif; }

.titlebar { display: flex; align-items: center; height: 23px; background: #fff; }
.titlebar .logo { width: 16px; height: 16px; margin: 0 5px 0 2px; }
.titlebar h1 { flex: 1; margin: 0; font: 400 12px/16px Roboto, sans-serif; }
.titlebar button { width: 45px; height: 20px; }
.titlebar button:last-child { width: 49px; }
.titlebar button svg { width: 12px; height: 12px; }
.titlebar path, .mdi path { fill: none; stroke: #000; }

.menubar { display: flex; align-items: center; height: 20px; border-bottom: 1px solid #a0a0a0; font: 11px/16px Roboto, sans-serif; }
.doc { width: 18px; height: 18px; margin: 0 5px 0 3px; }
.menu { padding: 0 2px; margin-right: 14px; }
.mdi { width: 18px; height: 18px; margin-left: 1px; background: #fff; border: 1px solid #dcdcdc; box-sizing: border-box; }
.mdi svg { width: 12px; height: 12px; }
.mdi path { stroke: #6f7f8f; }

.toolbar { display: flex; height: 27px; }
.toolbar.second { height: 26px; }
.band {
  display: flex;
  align-items: center;
  gap: 4px;
  padding: 0 4px 0 1px;
  border: 1px solid #a0a0a0;
  border-width: 0 1px 1px 0;
  border-top: 1px solid #fff;
}
.band.first { padding-right: 7px; }
.second .band { border-bottom: 0; padding-top: 1px; }
.band.next { padding-left: 2px; }
.grip { width: 3px; height: 19px; background: repeating-linear-gradient(#a0a0a0 0 1px, #f0f0f0 1px 2px); }
.sep { width: 1px; height: 20px; margin-right: 1px; background: #a0a0a0; }
.sep.wide { margin: 0 2px; }
.tool { height: 23px; min-width: 24px; font: 12px "DejaVu Sans Condensed", "DejaVu Sans", sans-serif; font-stretch: condensed; }
.tool svg { width: 20px; height: 20px; margin: 0 2px; }
.tool.on { background: #f8f8f8; box-shadow: inset 1px 1px #a0a0a0, inset -1px -1px #fff; }
.caption { margin-left: 2px; }
.frame { font-size: 10px; color: #444; }
.letter { font: bold 12px "Liberation Sans", sans-serif; color: #555; }
.caret { width: 0; height: 0; border: 3px solid transparent; border-top-color: #000; border-bottom: 0; margin-right: 2px; }
.find { display: flex; width: 203px; height: 24px; margin: 1px 1px 0 0; box-sizing: border-box; background: #fff; border: 1px solid #a9a9a9; }
.find input { flex: 1; min-width: 0; padding: 0 4px; }
.find svg { width: 16px; height: 16px; margin: 3px 2px 0; }
.find button { width: 30px; background: #dcdcdc; border-left: 1px solid #a9a9a9; }
.bubble {
  width: 16px;
  height: 16px;
  background: #6d87b5;
  color: #fff;
  font: bold 10px/12px "DejaVu Sans", sans-serif;
  text-align: center;
  clip-path: polygon(0 0, 100% 0, 100% 12px, 7px 12px, 6px 16px, 3px 12px, 0 12px);
}

.chart { display: flex; flex: 1; border-top: 1px solid #a0a0a0; border-left: 1px solid #a0a0a0; background: #dcdcdc; border-bottom: 1px solid #000; }
.panels { display: flex; flex: 1; flex-direction: column; min-width: 0; border-top: 1px solid #696969; border-left: 1px solid #696969; border-bottom: 1px solid #fff; padding-top: 2px; }
.panel { display: flex; margin: 0 0 2px 2px; }
.panel svg { display: block; }
.plot { flex: 1; width: 0; border: 1px solid #000; }
.price { flex: 1; min-height: 647px; }
.deep { height: 36px; }
.chop { height: 136px; margin-bottom: 0; }
.scale { width: 43px; height: 100%; padding-top: 1px; box-sizing: border-box; }
.times { width: 100%; height: 18px; }
.edge {
  width: 13px;
  background:
    linear-gradient(#b9d1ea, #dfeafa 84px, #fff 86px, #b9d1ea 91px) 1px 0 / 6px 100% no-repeat,
    linear-gradient(90deg, #fff 0 1px, #b9d1ea 1px 7px, #3cc8f0 7px 8px, #000 8px 9px, #a0a0a0 9px);
}

.tabs { display: flex; align-items: center; height: 18px; font: 11px "DejaVu Sans Condensed", "DejaVu Sans", sans-serif; font-stretch: condensed; color: #777; border-left: 2px solid #999; box-sizing: border-box; }
.tabs button { height: 12px; padding: 0 10px; border-right: 1px solid #777; }
.tabs button.first { border-right: 0; padding: 0 11px 0 13px; }
.tabs button.current { height: 18px; background: #fff; color: #000; border: 1px solid #000; border-top: 0; padding: 0 9px; }
.tabs i { border: 4px solid transparent; }
.tabs .left { border-right-color: #888; margin-right: 9px; }
.tabs .right { border-left-color: #888; margin-right: 3px; }

.status { display: flex; align-items: center; height: 20px; padding-left: 2px; border-top: 2px solid #fff; font-size: 11px; }
.help { flex: 1; }
.cell { height: 16px; padding-left: 5px; border-left: 1px solid #a0a0a0; box-sizing: border-box; white-space: nowrap; overflow: hidden; }
.profile { width: 116px; border-right: 2px solid #f0f0f0; }
.date { width: 102px; }
.quote { width: 71px; }
.low { width: 68px; }
.vol { width: 65px; }
.net { display: flex; width: 162px; align-items: center; }
.net svg { width: 24px; height: 12px; margin-right: 38px; }

.taskbar { display: flex; align-items: center; height: 40px; background: #03050a; color: #fff; }
.start { width: 48px; height: 40px; }
.start svg { width: 16px; height: 16px; }
.taskbar input { width: 344px; height: 40px; padding: 0 12px; box-sizing: border-box; background: #333; font-size: 14px; color: #fff; }
.taskbar input::placeholder { color: #9a9a9a; opacity: 1; }
.app { width: 48px; height: 40px; margin-right: 1px; box-sizing: border-box; }
.app svg { width: 20px; height: 20px; overflow: visible; }
.app.open { background: linear-gradient(#76b9ed, #76b9ed) center bottom / 40px 2px no-repeat; }
.app.active { background: #33373d; border-bottom: 2px solid #76b9ed; border-top: 2px solid #33373d; }
.app.active svg { width: 26px; height: 26px; }
.tray { width: 18px; height: 18px; margin: 0 3px; }
.tray.tiny { width: 14px; height: 14px; margin: 0 5px; }
.clock { display: flex; flex-direction: column; align-items: center; width: 72px; font-size: 12px; line-height: 17px; }
.peek { width: 1px; height: 40px; margin-right: 4px; background: #555; }
</style>
